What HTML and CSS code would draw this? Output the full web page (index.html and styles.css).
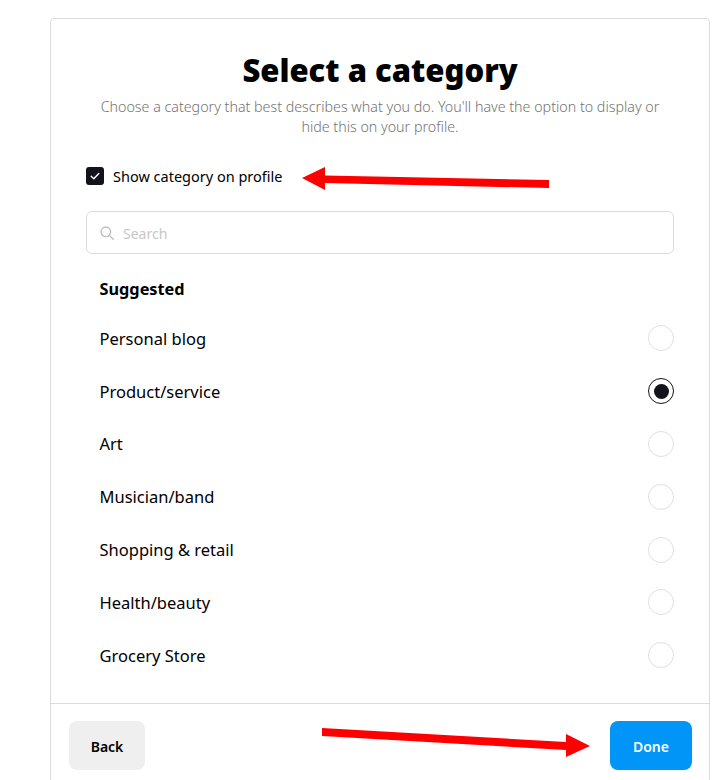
FILE: index.html
```html
<!DOCTYPE html>
<html lang="en">
<head>
<meta charset="utf-8">
<title>Select a category</title>
<link rel="stylesheet" href="styles.css">
</head>
<body>
<main class="card">
  <div class="content">
    <h1 class="title">Select a category</h1>
    <p class="subtitle">Choose a category that best describes what you do. You'll have the option to display or hide this on your profile.</p>
    <label class="show">
      <span class="checkbox"><svg width="16" height="16" viewBox="0 0 16 16"><path d="M4.2 8.3l2.6 2.5 5-5.2" fill="none" stroke="#fff" stroke-width="1.4" stroke-linecap="round" stroke-linejoin="round"/></svg></span>
      <span>Show category on profile</span>
    </label>
    <div class="search">
      <svg width="14" height="14" viewBox="0 0 14 14"><circle cx="5.8" cy="5.8" r="4.8" fill="none" stroke="#bdbdbd" stroke-width="1.3"/><path d="M9.4 9.4l3.9 3.9" stroke="#bdbdbd" stroke-width="1.3" stroke-linecap="round"/></svg>
      <span>Search</span>
    </div>
    <h2 class="heading">Suggested</h2>
    <ul class="list">
      <li class="row"><span>Personal blog</span><span class="radio"></span></li>
      <li class="row"><span>Product/service</span><span class="radio on"></span></li>
      <li class="row"><span>Art</span><span class="radio"></span></li>
      <li class="row"><span>Musician/band</span><span class="radio"></span></li>
      <li class="row"><span>Shopping &amp; retail</span><span class="radio"></span></li>
      <li class="row"><span>Health/beauty</span><span class="radio"></span></li>
      <li class="row"><span>Grocery Store</span><span class="radio"></span></li>
    </ul>
  </div>
  <footer class="footer">
    <button class="btn back">Back</button>
    <button class="btn done">Done</button>
  </footer>
</main>
<svg class="arrows" width="728" height="780" viewBox="0 0 728 780">
  <polygon fill="#ff0000" points="302,178 325,167 325,175.5 549,180 549,188 325,183 325,190"/>
  <polygon fill="#ff0000" points="322,728 566,742 566,734 590,746 566,757 566,750 322,736"/>
</svg>
</body>
</html>
```
FILE: styles.css
```css
* { box-sizing: border-box; }
html, body { margin: 0; padding: 0; height: 780px; overflow: hidden; background: #fff; }
body { font-family: "Noto Sans", "Open Sans", sans-serif; color: #000; position: relative; }
.card {
  width: 660px;
  height: 800px;
  margin: 18px 0 0 50px;
  border: 1px solid #dbdbdb;
  border-radius: 4px;
  display: flex;
  flex-direction: column;
}
.content { padding: 0 35px; flex: 0 0 684px; }
.title {
  margin: 29px 0 0;
  font-size: 31px;
  line-height: 44px;
  font-weight: 900;
  text-align: center;
}
.subtitle {
  margin: 5px 0 0;
  padding: 0 12px;
  font-size: 14.25px;
  line-height: 20px;
  font-weight: 300;
  color: #737373;
  text-align: center;
}
.show { display: flex; align-items: center; gap: 9px; margin-top: 29px; font-size: 14.5px; line-height: 20px; }
.checkbox {
  width: 18px; height: 18px; border-radius: 3px; background: #121419;
  display: flex; align-items: center; justify-content: center;
}
.search {
  display: flex; align-items: center; gap: 9px;
  height: 43px; margin-top: 25px; padding: 1px 13px 0;
  border: 1px solid #dbdbdb; border-radius: 6px;
  font-size: 14px; color: #c7c7c7;
}
.heading { margin: 23px 0 0; padding: 0 13.5px; font-size: 16.3px; line-height: 24px; font-weight: 700; }
.list { list-style: none; margin: 11px 0 0; padding: 0 0 0 13.5px; }
.row { display: flex; align-items: center; justify-content: space-between; height: 52.8px; font-size: 16.5px; }
.radio { width: 26px; height: 26px; border-radius: 50%; border: 1px solid #dfe0e6; }
.radio.on { border-color: #121419; display: flex; align-items: center; justify-content: center; }
.radio.on::after { content: ""; width: 15px; height: 15px; border-radius: 50%; background: #121419; }
.footer {
  border-top: 1px solid #dbdbdb;
  padding: 17px 17px 0 18px;
  display: flex; justify-content: space-between; align-items: flex-start;
}
.btn {
  height: 49px; border: 0; border-radius: 8px; padding: 2px 0 0;
  font-family: inherit; font-size: 14px; font-weight: 600;
}
.back { width: 76px; background: #efefef; color: #000; }
.done { width: 82px; background: #0095f6; color: #fff; }
.arrows { position: absolute; left: 0; top: 0; pointer-events: none; }
```
